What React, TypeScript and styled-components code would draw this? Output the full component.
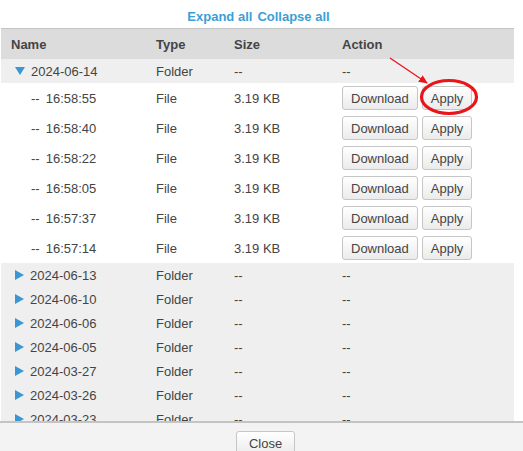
import styled, { createGlobalStyle } from "styled-components";

const GlobalStyle = createGlobalStyle`
  html, body {
    margin: 0;
    padding: 0;
    background: #fff;
  }
  body {
    font-family: "Liberation Sans", Arial, sans-serif;
    font-size: 13px;
    color: #444;
  }
`;

type FileItem = { time: string };
type FolderItem = { date: string; open?: boolean; files?: FileItem[] };

const folders: FolderItem[] = [
  {
    date: "2024-06-14",
    open: true,
    files: [
      { time: "16:58:55" },
      { time: "16:58:40" },
      { time: "16:58:22" },
      { time: "16:58:05" },
      { time: "16:57:37" },
      { time: "16:57:14" },
    ],
  },
  { date: "2024-06-13" },
  { date: "2024-06-10" },
  { date: "2024-06-06" },
  { date: "2024-06-05" },
  { date: "2024-03-27" },
  { date: "2024-03-26" },
  { date: "2024-03-23" },
  { date: "2024-03-20" },
];

const App = () => {
  return (
    <>
      <GlobalStyle />
      <Dialog>
        <ScrollArea>
          <Toolbar>
            <LinkButton>Expand all</LinkButton>
            <LinkButton>Collapse all</LinkButton>
          </Toolbar>
          <FileTable>
            <colgroup>
              <col style={{ width: 145 }} />
              <col style={{ width: 78 }} />
              <col style={{ width: 108 }} />
              <col />
            </colgroup>
            <thead>
              <tr>
                <HeadCell>Name</HeadCell>
                <HeadCell>Type</HeadCell>
                <HeadCell>Size</HeadCell>
                <HeadCell>Action</HeadCell>
              </tr>
            </thead>
            <tbody>
              {folders.map((f) => (
                <FolderGroup key={f.date} folder={f} />
              ))}
            </tbody>
          </FileTable>
          {/* red callout drawn over the first Apply button */}
          <Annotation width="523" height="140" viewBox="0 0 523 140">
            <defs>
              <marker
                id="arrowhead"
                markerWidth="9"
                markerHeight="8"
                refX="8"
                refY="4"
                orient="auto"
                markerUnits="userSpaceOnUse"
              >
                <path d="M0,0 L9,4 L0,8 Z" fill="#e8161b" />
              </marker>
            </defs>
            <line
              x1="390"
              y1="58"
              x2="427"
              y2="83"
              stroke="#e8161b"
              strokeWidth="1.3"
              markerEnd="url(#arrowhead)"
            />
            <ellipse
              cx="449"
              cy="97"
              rx="27.5"
              ry="16.5"
              fill="none"
              stroke="#e8161b"
              strokeWidth="3.2"
            />
          </Annotation>
        </ScrollArea>
        <Footer>
          <Button>Close</Button>
        </Footer>
      </Dialog>
    </>
  );
};

const FolderGroup = ({ folder }: { folder: FolderItem }) => (
  <>
    <FolderRow>
      <Cell>
        <Toggle open={!!folder.open} />
        {folder.date}
      </Cell>
      <Cell>Folder</Cell>
      <Cell>--</Cell>
      <Cell>--</Cell>
    </FolderRow>
    {folder.open &&
      folder.files?.map((file) => (
        <FileRow key={file.time}>
          <Cell>
            <FileName>
              <span>--</span>
              {file.time}
            </FileName>
          </Cell>
          <Cell>File</Cell>
          <Cell>3.19 KB</Cell>
          <Cell>
            <Actions>
              <Button>Download</Button>
              <Button>Apply</Button>
            </Actions>
          </Cell>
        </FileRow>
      ))}
  </>
);

export default App;

const Dialog = styled.div`
  display: flex;
  flex-direction: column;
  width: 523px;
  height: 451px;
  overflow: hidden;
`;

const ScrollArea = styled.div`
  position: relative;
  flex: 1;
  min-height: 0;
  overflow: hidden;
  padding: 0 9px 0 1px;
`;

const Toolbar = styled.div`
  height: 28px;
  display: flex;
  justify-content: center;
  align-items: center;
  gap: 5px;
  padding: 4px 0 0 2px;
  box-sizing: border-box;
`;

const LinkButton = styled.a`
  color: #3a9fd6;
  font-weight: bold;
  font-size: 13px;
  cursor: pointer;
`;

const FileTable = styled.table`
  width: 100%;
  border-collapse: collapse;
  table-layout: fixed;
  border-top: 1px solid #c4c4c4;
`;

const HeadCell = styled.th`
  height: 30px;
  padding: 0 10px;
  text-align: left;
  font-weight: bold;
  color: #444;
  background: #dcdcdc;
`;

const Cell = styled.td`
  padding: 0 10px;
  white-space: nowrap;
  vertical-align: middle;
`;

const FolderRow = styled.tr`
  height: 24px;
  background: #efefef;
`;

const FileRow = styled.tr`
  height: 30px;
  background: #fff;
`;

const Toggle = styled.span<{ open: boolean }>`
  display: inline-block;
  width: 0;
  height: 0;
  margin: 0 6px 0 4px;
  vertical-align: ${(p) => (p.open ? "1px" : "0px")};
  border-style: solid;
  ${(p) =>
    p.open
      ? `border-width: 8px 5px 0 5px;
         border-color: #3a97d4 transparent transparent transparent;`
      : `border-width: 5px 0 5px 9px;
         border-color: transparent transparent transparent #3a97d4;`}
`;

const FileName = styled.span`
  padding-left: 20px;
  span {
    margin-right: 6px;
  }
`;

const Actions = styled.div`
  display: flex;
  gap: 4px;
`;

const Button = styled.button`
  height: 24px;
  padding: 0 8px;
  font-family: "Liberation Sans", Arial, sans-serif;
  font-size: 13px;
  color: #444;
  background: linear-gradient(#ffffff, #ebebeb);
  border: 1px solid #c6c6c6;
  border-radius: 3px;
  cursor: pointer;
`;

const Annotation = styled.svg`
  position: absolute;
  left: 0;
  top: 0;
  pointer-events: none;
`;

const Footer = styled.div`
  height: 30px;
  flex: none;
  border-top: 2px solid #c4c4c4;
  background: #f3f3f3;
  display: flex;
  justify-content: center;
  align-items: flex-start;
  padding: 8px 0 0 8px;
  box-sizing: border-box;
  ${Button} {
    padding: 0 12px;
  }
`;
